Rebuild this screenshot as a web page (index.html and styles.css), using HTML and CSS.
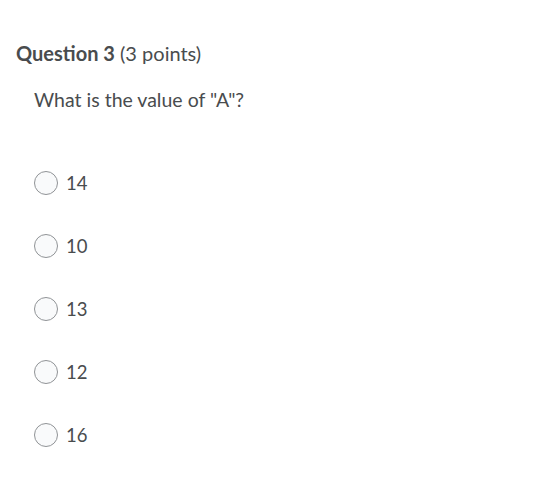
FILE: index.html
```html
<!DOCTYPE html>
<html>
<head>
<meta charset="utf-8">
<link rel="stylesheet" href="styles.css">
</head>
<body>
<div class="question">
  <h2 class="q-title"><strong>Question 3</strong> <span class="points">(3 points)</span></h2>
  <div class="q-body">
    <p class="q-text">What is the value of "A"?</p>
    <ul class="options">
      <li class="option"><span class="radio"></span><span class="label">14</span></li>
      <li class="option"><span class="radio"></span><span class="label">10</span></li>
      <li class="option"><span class="radio"></span><span class="label">13</span></li>
      <li class="option"><span class="radio"></span><span class="label">12</span></li>
      <li class="option"><span class="radio"></span><span class="label">16</span></li>
    </ul>
  </div>
</div>
</body>
</html>
```
FILE: styles.css
```css
html, body {
  margin: 0;
  padding: 0;
  background: #ffffff;
}
body {
  font-family: Lato, "Open Sans", sans-serif;
  color: #494c4e;
}
.question {
  padding: 41px 16px 0 16px;
}
.q-title {
  margin: 0;
  font-size: 20px;
  line-height: 24px;
  font-weight: 400;
}
.q-title strong {
  font-weight: 700;
}
.q-body {
  padding-left: 18px;
}
.q-text {
  margin: 23px 0 0 0;
  font-size: 19.5px;
  line-height: 24px;
}
.options {
  list-style: none;
  margin: 59px 0 0 0;
  padding: 0;
  display: flex;
  flex-direction: column;
  gap: 39px;
}
.option {
  display: flex;
  align-items: center;
  gap: 8px;
  height: 24px;
}
.radio {
  width: 22px;
  height: 22px;
  border: 1px solid #909396;
  border-radius: 50%;
  background: #f9fafb;
  flex: none;
}
.label {
  font-size: 18.5px;
  line-height: 24px;
}
```
